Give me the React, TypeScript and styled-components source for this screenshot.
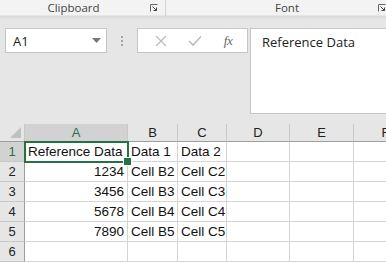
import React from 'react';
import styled, { createGlobalStyle } from 'styled-components';

const GlobalStyle = createGlobalStyle`
  html, body {
    margin: 0;
    padding: 0;
    background: #e6e6e6;
    overflow: hidden;
  }
  * { box-sizing: border-box; }
`;

const Page = styled.div`
  width: 386px;
  height: 262px;
  overflow: hidden;
  background: #e6e6e6;
  font-family: 'Open Sans', 'Noto Sans', sans-serif;
`;

// Ribbon group labels
const Ribbon = styled.div`
  display: flex;
  height: 20px;
  background: linear-gradient(#f3f3f3 0, #f3f3f3 15px, #d9d9d9 16px, #e6e6e6 20px);
`;

const Group = styled.div<{ $width: number; $padLeft: number; $padRight: number; $last?: boolean }>`
  position: relative;
  flex: 0 0 ${(p) => p.$width}px;
  height: 16px;
  border-right: ${(p) => (p.$last ? 'none' : '1px solid #d4d4d4')};
  display: flex;
  align-items: center;
  justify-content: center;
  font-size: 11.5px;
  color: #444;
  padding-left: ${(p) => p.$padLeft}px;
  padding-right: ${(p) => p.$padRight}px;
  padding-bottom: 1px;
`;

const Launcher = styled.span<{ $right: number }>`
  position: absolute;
  right: ${(p) => p.$right}px;
  top: 4px;
  width: 8px;
  height: 8px;
  display: flex;
`;

// Formula bar
const FormulaBar = styled.div`
  display: flex;
  align-items: flex-start;
  padding: 8px 0 0 5px;
  height: 104px;
`;

const NameBox = styled.div`
  width: 102px;
  height: 25px;
  background: #fff;
  border: 1px solid #c6c6c6;
  display: flex;
  align-items: center;
  justify-content: space-between;
  padding: 0 5px 0 7px;
  font-size: 13px;
  color: #222;
`;

const Dots = styled.div`
  width: 30px;
  height: 25px;
  display: flex;
  flex-direction: column;
  align-items: center;
  justify-content: center;
  gap: 2px;

  span {
    width: 2px;
    height: 2px;
    background: #a6a6a6;
  }
`;

const ButtonBox = styled.div`
  width: 111px;
  height: 25px;
  background: #fff;
  border: 1px solid #c6c6c6;
  display: flex;
  align-items: center;
  justify-content: space-around;
  padding: 0 4px 0 6px;
`;

const Fx = styled.span`
  font-family: 'Liberation Serif', serif;
  font-style: italic;
  font-size: 13px;
  color: #666;
  letter-spacing: -0.5px;
`;

const FormulaInput = styled.div`
  margin-left: 2px;
  flex: 1;
  height: 86px;
  background: #fff;
  border: 1px solid #c6c6c6;
  border-right: none;
  padding: 4px 0 0 11px;
  font-size: 13px;
  color: #222;
`;

// Grid
const Sheet = styled.div`
  position: relative;
  display: grid;
  grid-template-columns: 25px 103px 50px 49px 63px 64px 64px;
  grid-template-rows: 18px repeat(6, 20px);
  background: #fff;
`;

const Corner = styled.div`
  background: #e6e6e6;
  border-right: 1px solid #c8c8c8;
  border-bottom: 1px solid #9e9e9e;
  position: relative;

  &::after {
    content: '';
    position: absolute;
    right: 3px;
    bottom: 3px;
    border-left: 11px solid transparent;
    border-bottom: 11px solid #c0c0c0;
  }
`;

const ColHead = styled.div<{ $active?: boolean }>`
  background: ${(p) => (p.$active ? '#d2d2d2' : '#e6e6e6')};
  border-right: 1px solid #c8c8c8;
  border-bottom: 1px solid ${(p) => (p.$active ? '#217346' : '#9e9e9e')};
  display: flex;
  align-items: center;
  justify-content: center;
  font-family: 'Liberation Sans', Arial, sans-serif;
  font-size: 13px;
  color: ${(p) => (p.$active ? '#217346' : '#222')};
`;

const RowHead = styled.div<{ $active?: boolean }>`
  background: ${(p) => (p.$active ? '#d2d2d2' : '#e6e6e6')};
  border-right: 1px solid ${(p) => (p.$active ? '#217346' : '#9e9e9e')};
  border-bottom: 1px solid #c8c8c8;
  display: flex;
  align-items: center;
  justify-content: center;
  font-family: 'Liberation Sans', Arial, sans-serif;
  font-size: 13px;
  color: ${(p) => (p.$active ? '#217346' : '#222')};
`;

const Cell = styled.div<{ $num?: boolean }>`
  border-right: 1px solid #d4d4d4;
  border-bottom: 1px solid #d4d4d4;
  display: flex;
  align-items: center;
  justify-content: ${(p) => (p.$num ? 'flex-end' : 'flex-start')};
  padding: 0 3px;
  font-family: 'Liberation Sans', Arial, sans-serif;
  font-size: 13.5px;
  color: #111;
  white-space: nowrap;
  overflow: hidden;
`;

const Selection = styled.div`
  position: absolute;
  left: 24px;
  top: 17px;
  width: 105px;
  height: 22px;
  border: 2px solid #217346;
  pointer-events: none;

  &::after {
    content: '';
    position: absolute;
    right: -5px;
    bottom: -5px;
    width: 7px;
    height: 7px;
    background: #217346;
    border: 1px solid #fff;
  }
`;

const LauncherIcon = () => (
  <svg width="8" height="8" viewBox="0 0 8 8">
    <path d="M0.5 7.5V0.5H7.5" stroke="#666" fill="none" />
    <path d="M2.5 2.5L6.5 6.5M3.5 6.5H6.5V3.5" stroke="#444" fill="none" />
  </svg>
);

const columns = ['A', 'B', 'C', 'D', 'E', 'F'];

const rows: string[][] = [
  ['Reference Data', 'Data 1', 'Data 2'],
  ['1234', 'Cell B2', 'Cell C2'],
  ['3456', 'Cell B3', 'Cell C3'],
  ['5678', 'Cell B4', 'Cell C4'],
  ['7890', 'Cell B5', 'Cell C5'],
  [],
];

const App = () => {
  return (
    <Page>
      <GlobalStyle />
      <Ribbon>
        <Group $width={166} $padLeft={0} $padRight={18}>
          Clipboard
          <Launcher $right={7}>
            <LauncherIcon />
          </Launcher>
        </Group>
        <Group $width={220} $padLeft={22} $padRight={0} $last>
          Font
          <Launcher $right={0}>
            <LauncherIcon />
          </Launcher>
        </Group>
      </Ribbon>

      <FormulaBar>
        <NameBox>
          A1
          <svg width="9" height="5" viewBox="0 0 9 5">
            <path d="M0 0H9L4.5 5Z" fill="#777" />
          </svg>
        </NameBox>
        <Dots>
          <span />
          <span />
          <span />
        </Dots>
        <ButtonBox>
          <svg width="12" height="12" viewBox="0 0 12 12">
            <path d="M1 1L11 11M11 1L1 11" stroke="#bdbdbd" strokeWidth="1.3" fill="none" />
          </svg>
          <svg width="14" height="12" viewBox="0 0 14 12">
            <path d="M1 6L5 10L13 1.5" stroke="#bdbdbd" strokeWidth="1.6" fill="none" />
          </svg>
          <Fx>fx</Fx>
        </ButtonBox>
        <FormulaInput>Reference Data</FormulaInput>
      </FormulaBar>

      <Sheet>
        <Corner />
        {columns.map((c) => (
          <ColHead key={c} $active={c === 'A'}>
            {c}
          </ColHead>
        ))}
        {rows.map((r, i) => (
          <React.Fragment key={i}>
            <RowHead $active={i === 0}>{i + 1}</RowHead>
            {columns.map((c, j) => {
              const v = r[j] ?? '';
              return (
                <Cell key={c} $num={/^\d+$/.test(v)}>
                  {v}
                </Cell>
              );
            })}
          </React.Fragment>
        ))}
        <Selection />
      </Sheet>
    </Page>
  );
};

export default App;
